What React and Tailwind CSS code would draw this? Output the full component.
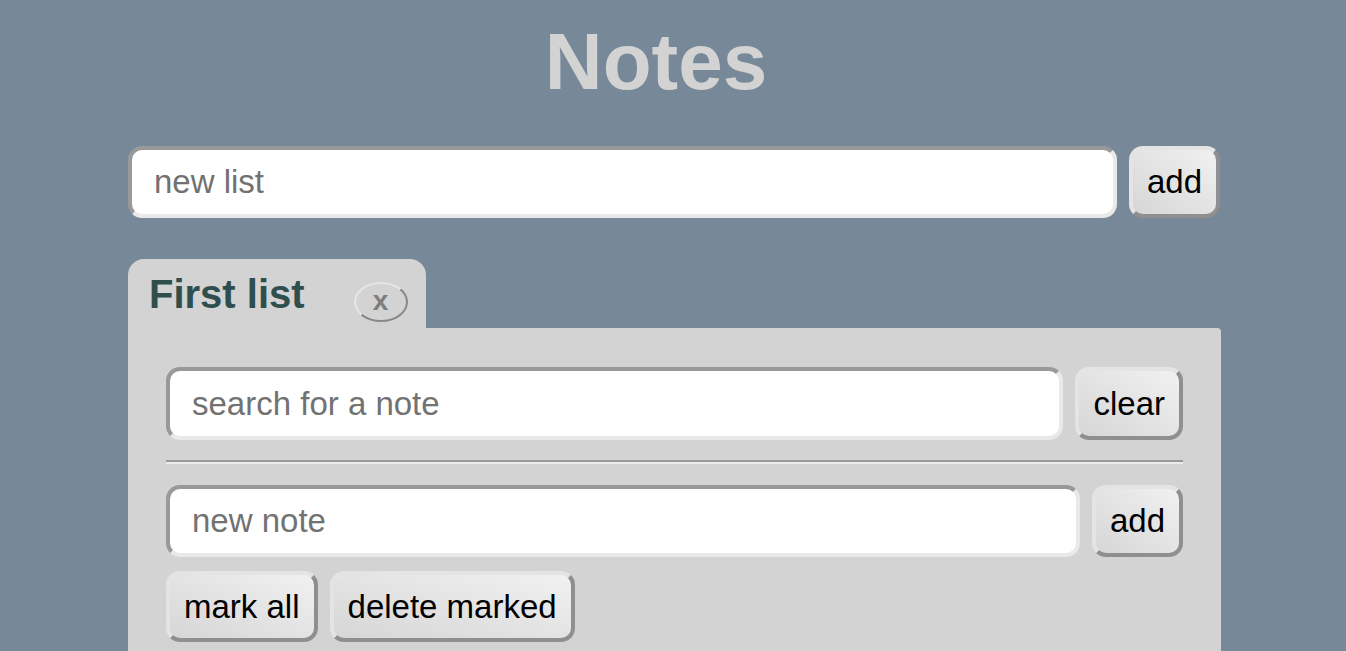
export default function App() {
  const font = { fontFamily: '"Liberation Sans", Arial, sans-serif' };

  // inset-looking text field
  const field =
    "flex-1 min-w-0 rounded-[14px] border-4 border-t-[#999999] border-l-[#999999] border-b-[#e9e9e9] border-r-[#e9e9e9] bg-white pl-[22px] text-[33px] text-black placeholder:text-[#727272] outline-none";
  // outset-looking button
  const btn =
    "shrink-0 rounded-[14px] border-4 border-t-[#e4e4e4] border-l-[#e4e4e4] border-b-[#8f8f8f] border-r-[#8f8f8f] bg-linear-to-tr from-[#d6d6d6] to-[#f1f1f1] px-[14px] text-[33px] text-black";

  return (
    <div className="min-h-[651px] w-full overflow-hidden bg-[#778899]" style={font}>
      <h1 className="mt-[22px] h-[80px] pr-[34px] text-center text-[80px] font-bold leading-none text-[#d3d3d3]">
        Notes
      </h1>

      <div className="ml-[128px] w-[1093px]">
        <div className="mt-[44px] flex h-[72px] gap-[12px] pr-[1px]">
          <input className={field} placeholder="new list" />
          <button className={btn}>add</button>
        </div>

        <div className="mt-[41px]">
          {/* tab */}
          <div className="flex h-[69px] w-[298px] items-start rounded-t-[16px] bg-[#d3d3d3] pl-[21px]">
            <span className="mt-[15px] text-[40px] font-bold leading-none text-[#2f4f4f]">First list</span>
            <button className="ml-[49px] mt-[23px] flex h-[40px] w-[54px] items-center justify-center rounded-[50%] border-2 border-t-[#e6e6e6] border-l-[#e6e6e6] border-b-[#888888] border-r-[#888888] pb-[3px] text-[28px] font-bold leading-none text-[#7d7d7d]">
              x
            </button>
          </div>

          {/* panel */}
          <div className="rounded-tr-[4px] bg-[#d3d3d3] px-[38px] pt-[39px] pb-[40px]">
            <div className="flex h-[73px] gap-[12px]">
              <input className={field} placeholder="search for a note" />
              <button className={btn}>clear</button>
            </div>

            <div className="mt-[20px] h-[4px] border-t-2 border-b-2 border-t-[#999999] border-b-[#ececec]" />

            <div className="mt-[21px] flex h-[72px] gap-[12px]">
              <input className={field} placeholder="new note" />
              <button className={btn}>add</button>
            </div>

            <div className="mt-[14px] flex h-[71px] gap-[12px]">
              <button className={btn}>mark all</button>
              <button className={btn}>delete marked</button>
            </div>
          </div>
        </div>
      </div>
    </div>
  );
}
